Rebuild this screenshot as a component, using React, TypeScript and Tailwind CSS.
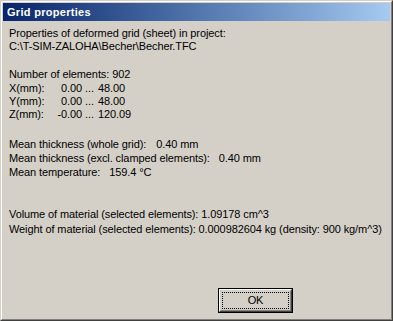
export default function App() {
  const face = "bg-[#d4d0c8]";
  return (
    <div className="w-[393px] h-[321px] bg-[#d4d0c8] border border-t-[#d4d0c8] border-l-[#d4d0c8] border-b-[#404040] border-r-[#404040]">
      <div className={`w-full h-full ${face} border border-t-white border-l-white border-b-[#808080] border-r-[#808080] p-px flex flex-col`}>
        {/* title bar */}
        <div className="h-[18px] shrink-0 bg-gradient-to-r from-[#0a246a] to-[#a6caf0] flex items-center pl-[4px]">
          <span className="text-white font-bold text-[11px] tracking-[0.3px] leading-[18px] font-['Liberation_Sans',Arial,sans-serif]">
            Grid properties
          </span>
        </div>

        <div className="flex flex-col pl-[6px] text-black text-[11px] tracking-[-0.1px] leading-[13px] font-['Liberation_Sans',Arial,sans-serif]">
          <div className="h-[13px] mt-[6px]">Properties of deformed grid (sheet) in project:</div>
          <div className="h-[13px]">C:\T-SIM-ZALOHA\Becher\Becher.TFC</div>

          <div className="h-[13px] mt-[15px]">Number of elements: 902</div>
          <Range label="X(mm):" a="0.00" b="48.00" className="mt-px" />
          <Range label="Y(mm):" a="0.00" b="48.00" />
          <Range label="Z(mm):" a="-0.00" b="120.09" />

          <div className="h-[13px] mt-[17px] flex">
            <span>Mean thickness (whole grid):</span>
            <span className="ml-[10px]">0.40 mm</span>
          </div>
          <div className="h-[13px] mt-px flex">
            <span>Mean thickness (excl. clamped elements):</span>
            <span className="ml-[9px]">0.40 mm</span>
          </div>
          <div className="h-[13px] mt-px flex">
            <span>Mean temperature:</span>
            <span className="ml-[9px]">159.4 °C</span>
          </div>

          <div className="h-[13px] mt-[29px]">Volume of material (selected elements): 1.09178 cm^3</div>
          <div className="h-[13px] mt-[2px] whitespace-nowrap">
            Weight of material (selected elements): 0.000982604 kg (density: 900 kg/m^3)
          </div>

          <div className="mt-[52px] ml-[209px]">
            <button className="w-[75px] h-[25px] border border-black bg-[#d4d0c8] p-0 block">
              <div className="w-full h-full border border-t-white border-l-white border-b-[#404040] border-r-[#404040]">
                <div className="w-full h-full border border-t-[#d4d0c8] border-l-[#d4d0c8] border-b-[#808080] border-r-[#808080] p-px">
                  <div className="w-full h-full border border-dotted border-black flex items-center justify-center text-[11px] text-black">
                    OK
                  </div>
                </div>
              </div>
            </button>
          </div>
        </div>
      </div>
    </div>
  );
}

function Range({ label, a, b, className = "" }: { label: string; a: string; b: string; className?: string }) {
  return (
    <div className={`h-[13px] flex whitespace-nowrap ${className}`}>
      <span className="w-[41px]">{label}</span>
      <span className="w-[32px] text-right">{a}</span>
      <span className="w-[16px] pl-[3px]">...</span>
      <span>{b}</span>
    </div>
  );
}
